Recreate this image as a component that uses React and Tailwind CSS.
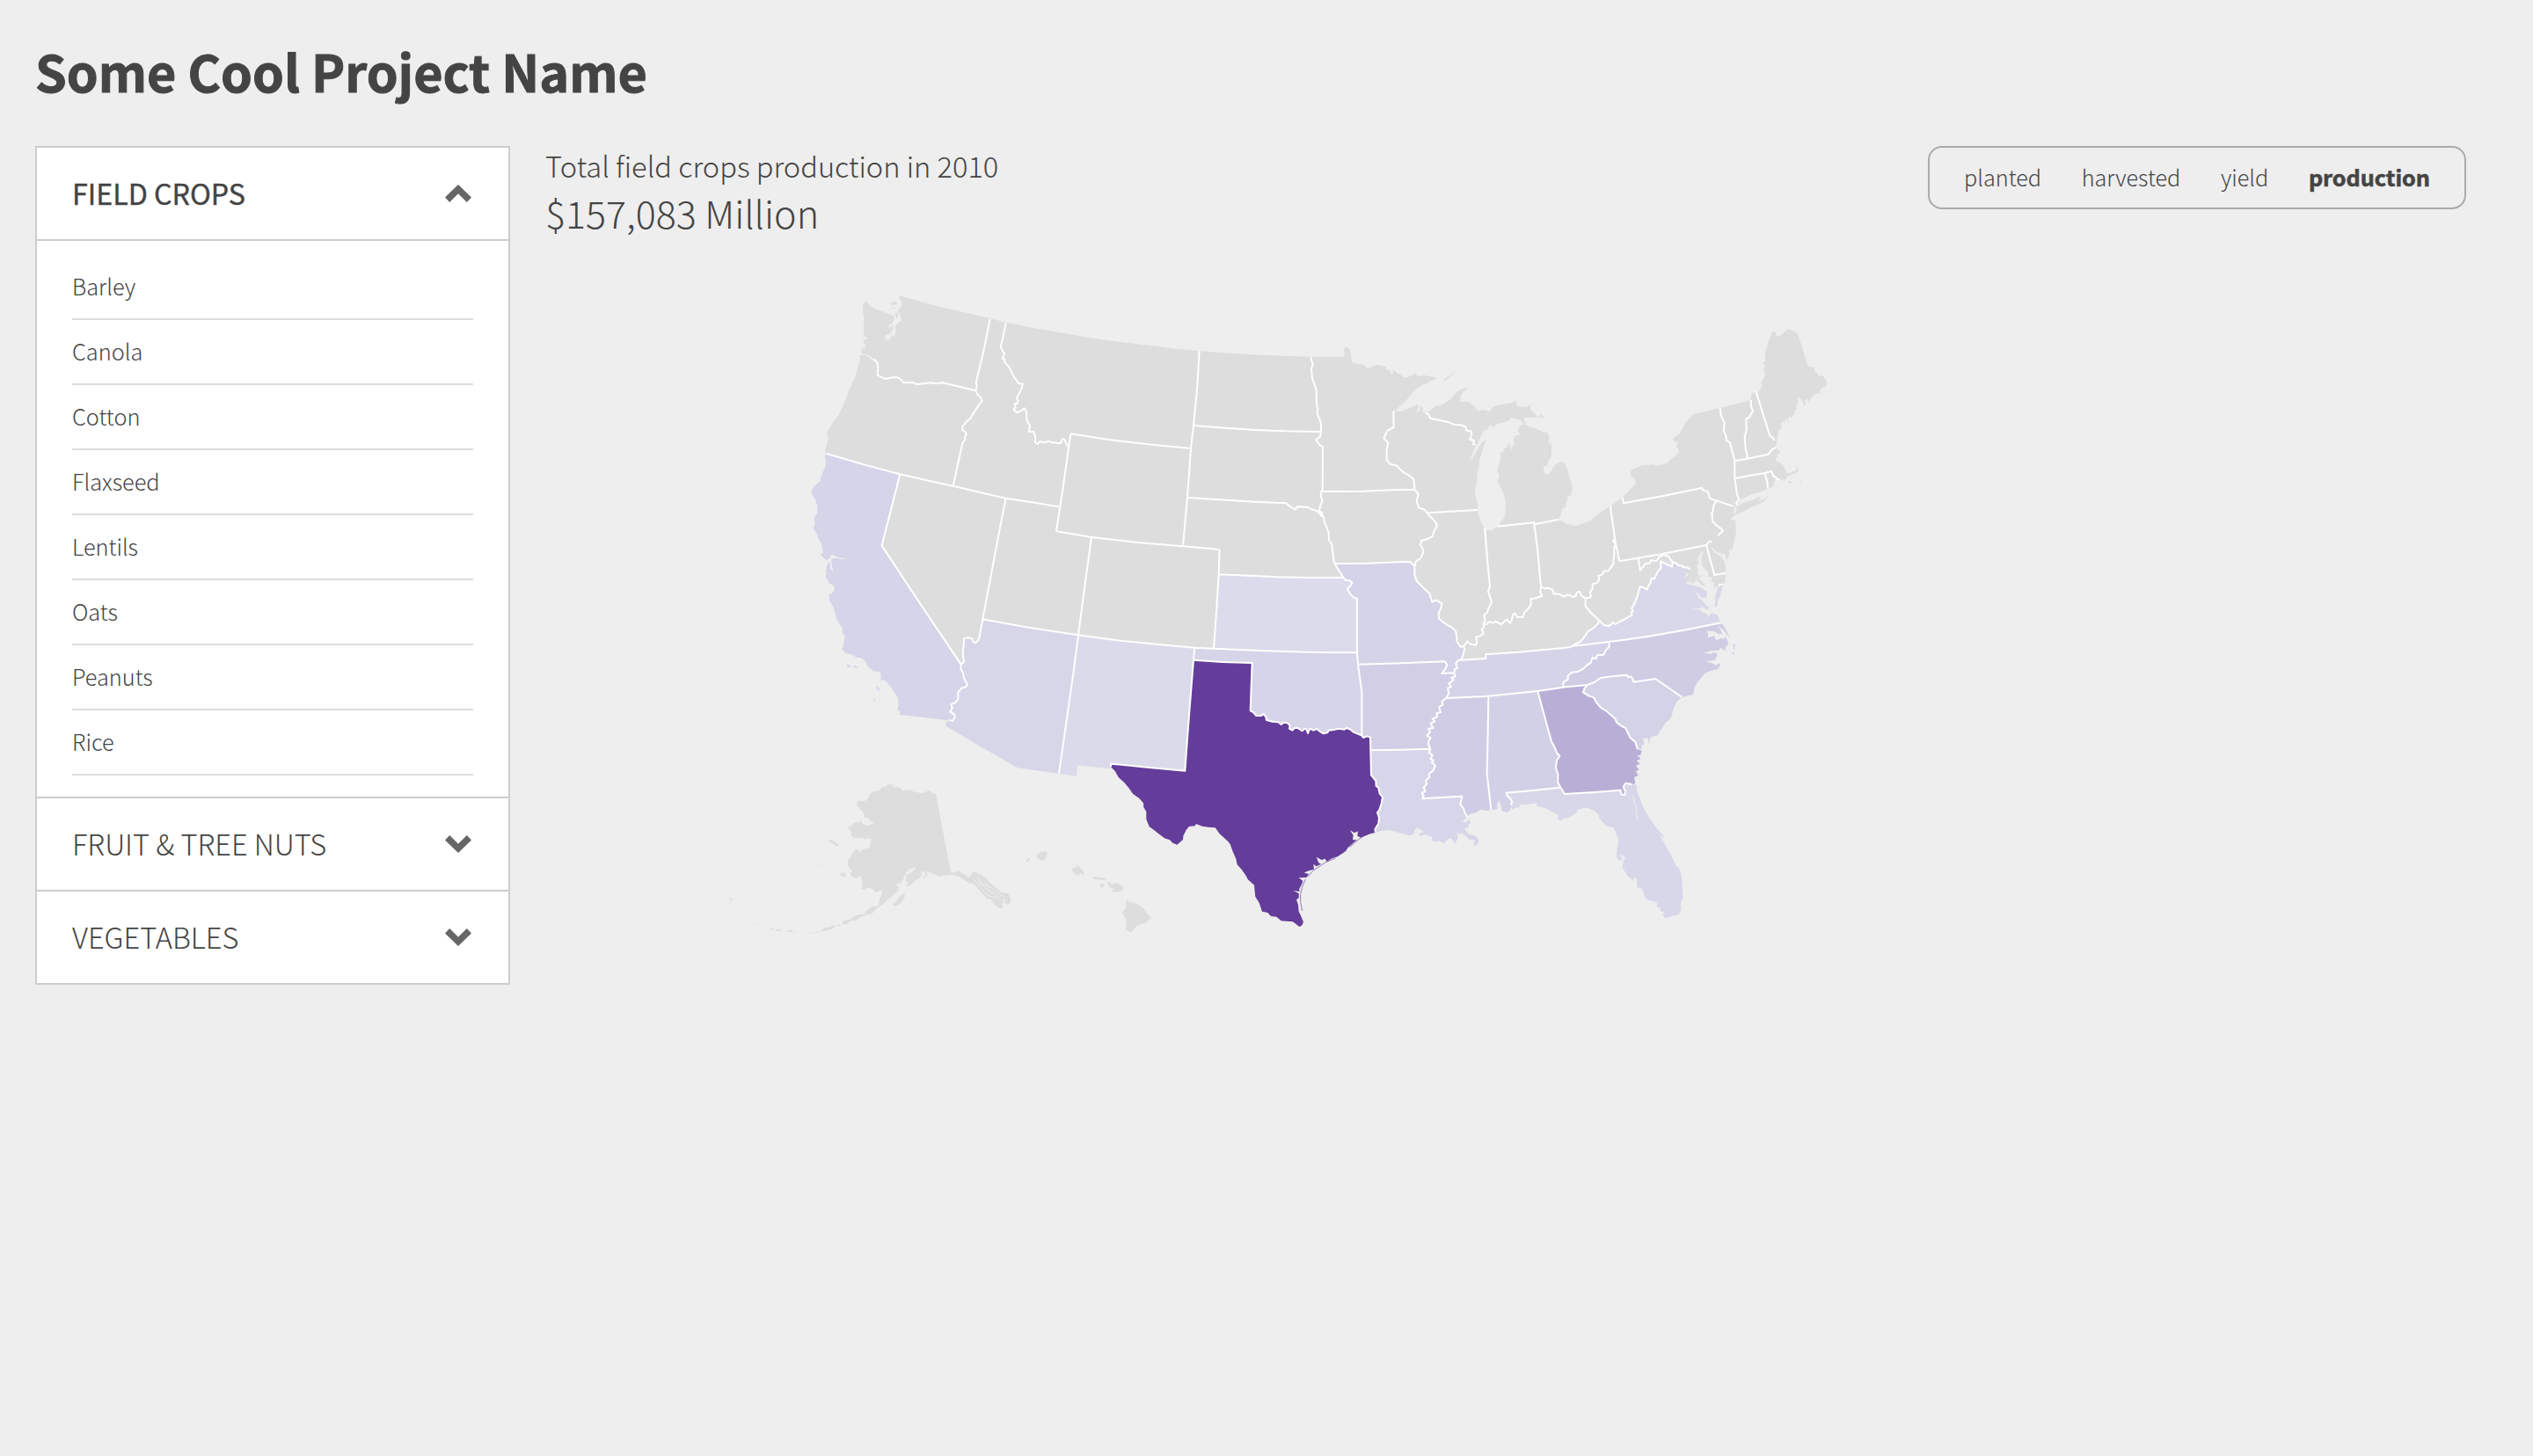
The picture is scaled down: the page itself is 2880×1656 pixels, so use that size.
import React from "react";

/* ---------- map geometry ---------- */

// Tile origins; arc points are written relative to the tile whose letter precedes them.
const TILES = {
  A: [840, 60],
  B: [1740, 60],
  C: [2640, 180],
  D: [3480, 180],
  E: [840, 900],
  F: [1800, 900],
  G: [2760, 900],
  H: [570, 1710],
};

function parseArc(text) {
  let origin = [0, 0];
  const points = [];
  text.trim().split(/\s+/).forEach((token) => {
    if (TILES[token]) {
      origin = TILES[token];
      return;
    }
    const [x, y] = token.split(",").map(Number);
    points.push([x + origin[0], y + origin[1]]);
  });
  return points;
}

const COASTS = {
  north: `A 118,588 115,577 119,560 125,534 120,515 128,502 144,478 160,458 170,436 186,400 192,380 204,354 215,330 223,308 228,285 234,270 233,250
    242,252 254,254 264,258 273,267 278,267 270,255 256,250 240,247 235,240 240,236 244,222 247,236 250,218 256,213 246,212 244,202 262,194 248,188 246,160 248,120 243,106 243,82 253,68 266,80 282,93 308,103 330,110 346,116 352,126 344,142 326,158 342,154 348,146 344,166 338,178 322,184 314,197 324,192 322,200 334,199 342,184 352,189 356,166 354,152 362,144 375,134 370,110 362,104 364,96 374,86 376,70 368,60 366,50 374,50 420,63 460,74 520,90 550,97 677,126 731,140 830,160 960,182
    B 60,182 110,191 170,200 230,208 340,221 420,231 491,238 600,245 700,251 800,255 870,257 960,258
    C 85,137 86,106 92,104 102,110 106,118 109,140 112,155 120,160 135,162 155,166 163,176 178,174 184,168 198,165 215,169 228,172 226,180 238,182 246,197 251,194 250,186 260,186 265,193 280,200 291,209 302,207 316,200 328,192 336,203 362,201 380,205 402,209
    385,218 370,226 355,232 335,243 320,258 300,282 280,302 262,318 266,324 280,323 304,315 335,300 339,308 333,320 335,327 345,318 341,310 350,305 354,314 350,324 366,330
    378,322 386,314 395,306 420,301 434,292 450,280 468,258 482,249 496,244 508,247 495,254 483,268 482,280 474,304 470,282 478,290 486,291 512,292 525,305 542,322 560,319 580,324 592,310 606,303 628,299 650,296 670,287 674,300 674,306 690,308 705,308 722,299 719,310 722,320 736,332 744,343 751,341 754,333 766,340 764,346 735,344 700,346 697,353 706,364 696,366 690,356 672,348 655,346 645,357 625,362 605,368 592,380 590,372 578,373 575,384 562,390 554,402 547,420 540,434
    530,448 522,468 513,487 522,486 532,467 545,445 556,428 570,420 562,438 556,462 546,490 545,516 537,532 540,550 538,566 531,590 530,602 541,640 540,660 543,676 552,700 563,726 582,730 596,725 608,716 618,703 630,688 635,665 636,632 628,602 618,582 608,560 614,544 607,522 618,490 617,466 628,462 630,450 640,446 648,428 652,450 657,455 656,430 663,452 665,430 661,418 670,406 685,402 677,391 684,374 696,366 716,376 734,380 750,388 768,395 778,395 786,415 781,426 792,438 792,476 782,492 779,508 765,512 766,532 780,541 792,526 802,508 825,495 836,500 846,520 854,550 864,580 860,610 846,612 848,622 841,640 842,648 828,656 824,676 815,693 835,702 848,710 862,705 852,713 880,714 898,706 925,698 942,680 960,667
    D 153,648 193,617 216,595 236,574 240,562 226,546 221,532 226,522 248,513 258,508 300,505 311,510 345,500 362,485 385,468 386,452 377,445 383,433 378,427 376,430 366,420 372,412 390,398 398,382 412,360 426,342 437,333 527,311 633,285 633,266 642,258 650,260 664,252 666,240 672,238 666,224 676,212 681,196 676,180 680,166 674,160 683,150 680,122 694,80 705,52 715,51 720,66 728,68 748,52 758,44 775,48 793,60 804,96 816,134 827,170 838,173 848,172 850,188 856,192 866,208 868,202 878,202 893,223 886,240 878,242 866,252 868,262 856,262 846,270 838,278 830,292 826,282 816,286 820,298 812,305 810,290 802,282 792,272 794,288 788,302 790,320 782,318 780,332 770,346 760,340 760,362 752,346 748,358 736,362 736,378 726,392 724,412 720,428 718,445 724,454 736,462 722,470 722,480 714,490 732,500 744,508 748,522 757,535 770,532 788,524 787,510 779,505 794,520 792,530 768,540 757,546 748,560 738,556 730,564 722,552 714,560 708,580 691,588 660,600 630,608 600,624 586,642 576,652 574,680 563,692 580,696 582,738 574,770 572,790 558,796 558,812 551,830 546,830 546,812 530,808 515,803 496,782 500,795 510,806 528,818 540,832 545,846 547,876 544,906 537,914`,
  delmarva: `D 537,914 530,940 526,958 518,970 516,993 509,990 511,960 513,945 522,918`,
  marylandBay: `D 522,918 505,928 508,912 496,902 500,890 486,888 488,876 474,860 466,850 463,836 464,820 472,798 460,808 453,822 447,824 456,836 449,852 452,868 450,880 466,888 454,892 470,908 478,924 460,912 446,898 436,910 424,905 406,907 407,886 418,884 415,872 425,862`,
  va: `G 1145,142 1136,152 1124,170 1130,190 1145,196 1180,205 1203,218 1200,240 1186,240 1172,224 1148,204 1165,222 1176,244 1188,248 1196,262 1210,272 1204,280 1180,266 1165,250 1186,276 1144,275 1180,282 1190,292 1200,293 1206,304 1218,292 1238,298 1244,316 1250,325`,
  nc: `G 1250,325 1262,340 1280,374 1270,364 1256,346 1236,334 1250,350 1254,364 1240,362 1228,354 1198,352 1206,360 1206,376 1226,370 1234,386 1250,378 1262,380 1264,370 1272,385 1275,400 1268,404 1264,420 1250,410 1240,420 1216,420 1190,428 1216,432 1226,426 1238,432 1230,452 1198,457 1222,464 1232,470 1250,462 1240,482 1214,490 1196,496 1170,528 1160,545 1155,570 1130,575 1116,578`,
  sc: `G 1116,578 1100,594 1088,616 1082,642 1072,658 1060,666 1050,684 1038,700 1036,708 1012,714 1006,726 1006,740 1000,718 984,720 988,742 980,738 980,756 966,757`,
  ga: `G 966,757 980,762 975,778 964,776 976,790 962,796 974,806 960,812 970,826 960,832 968,846 954,852 958,872 947,877`,
  fl: `G 947,877 962,878 963,900 974,924 982,950 1002,984 1030,1025 1054,1052 1054,1058 1042,1048 1048,1062 1070,1102 1084,1126 1096,1154 1108,1164 1116,1192 1118,1220 1120,1265 1112,1280 1114,1304 1105,1320 1088,1324 1060,1333 1052,1322 1058,1312 1044,1310 1042,1294 1032,1296 1032,1280 1022,1276 998,1270 990,1258 982,1232 964,1228 964,1194 954,1196 950,1205 932,1188 914,1160 918,1136 926,1128 916,1118 904,1116 914,1132 904,1136 895,1128 896,1096 900,1080 899,1060 890,1036 882,1022 862,1020 852,1010 834,990 834,980 815,964 790,955 778,958 760,963 758,972 738,986 710,994 706,1000 694,994 696,980 674,970 650,956 620,950 624,942 606,942 578,946 560,944 566,952 550,956 537,962 535,948`,
  al: `G 535,948 530,966 518,972 502,966 500,950 493,930 488,940 486,962 466,962`,
  ms: `G 466,962 450,966 430,962 410,975 396,976 385,985`,
  la: `G 385,985 376,995 366,1004 382,1006 388,996 398,1010 388,1012 390,1024 374,1026 390,1048 412,1052 424,1068 420,1080 406,1086 410,1066 392,1064 376,1048 366,1040 360,1048 350,1038 352,1060 344,1078 330,1060 316,1064 306,1078 292,1070 272,1072 264,1066 266,1056 240,1046 224,1052 220,1044 236,1040 230,1032 212,1024 202,1038 206,1042 190,1050 172,1046 140,1037 118,1032 92,1034 72,1040`,
  tx: `F 1032,1040 1010,1046 982,1058 970,1052 972,1036 960,1042 945,1033 956,1050 954,1066 968,1066 958,1074 938,1092 930,1104 904,1122 880,1130 866,1140 860,1130 848,1134 830,1124 838,1144 846,1148 830,1156 820,1148 822,1166 800,1172 788,1178 804,1182 796,1194 770,1195 784,1206 780,1218 772,1232 772,1242 750,1238 770,1248 770,1264 762,1270 768,1288 770,1310 776,1322 786,1346 780,1358 772,1362 750,1345 710,1342 694,1328 675,1326 664,1314 645,1310 635,1280 622,1260 618,1220 596,1200 590,1188 576,1168 560,1150 556,1130 546,1108 536,1080 528,1070 500,1045 485,1024 468,1023 440,1019 420,1011 416,1018 396,1020 386,1032 376,1052 375,1065 355,1082 340,1076 330,1066 312,1060 295,1047 276,1032 260,1020 250,995 250,970 241,954 240,940 226,924 204,908 190,888 175,870 155,852 143,830 129,817`,
  nm: `F 129,822 15,811 12,848 E 912,839`,
  az: `E 912,839 770,819 650,750 527,677 527,668 532,662 537,658`,
  ca: `E 537,658 450,647 368,638 370,628 362,622 365,605 363,582 350,560 336,540 322,524 315,520 305,523 305,500 300,492 280,490 258,472 256,462 240,445 222,443 210,435 182,427 172,413 178,402 180,382 183,370 171,356 176,348 164,330 155,316 148,290 142,270 130,250 128,228 142,222 147,207 140,195 130,192 118,170 118,150 122,126 130,116 132,140 144,152 138,130 136,108 150,104 168,108 186,108 176,104 160,102 150,96 136,92 130,104 118,112 98,92 108,88 106,70 100,50 92,38 86,20
    A 75,845 80,828 78,808 88,790 88,765 80,742 68,722 70,708 84,694 98,682 102,662 116,632 117,610 113,600 118,588`,
};

const BORDERS = {
  waId: `A 677,128 656,234 640,300 629,345 632,358 628,373`,
  waOr: `A 278,266 286,270 294,282 295,300 293,320 304,325 318,333 345,328 362,328 374,336 382,346 398,346 415,344 418,349 432,351 455,348 478,346 495,349 515,346 628,373`,
  orId: `A 628,373 634,386 645,396 649,408 636,426 617,455 612,466 602,474 584,493 582,507 593,514 597,522 591,530 592,540 583,552 551,698`,
  idMt: `A 731,142 720,196 713,224 726,248 720,262 728,268 725,274 742,292 750,308 758,326 768,338 774,348 789,350 782,372 774,386 768,400 773,408 769,418 761,418 764,432 757,438 768,448 782,442 795,433 801,445 801,464 806,482 813,492 810,512 826,514 832,534 831,550 840,555 846,547 866,550 875,545 890,550 918,553 922,540 930,538 936,550 942,562`,
  caOr: `A 120,588 245,625 370,658`,
  nvOr: `A 370,658 460,679 551,698`,
  idSouth: `A 551,698 640,719 731,740 820,754 911,769`,
  caNv: `A 370,658 308,900 E 308,62 440,262 578,467`,
  nvUt: `A 731,740 711,840 E 652,313`,
  nvAz: `E 652,313 640,378 634,388 627,394 620,390 615,379 600,375 588,379 587,405 584,420 588,458 578,467`,
  caAz: `E 578,467 577,482 585,496 588,514 600,535 594,544 580,548 568,562 568,585 558,598 544,603 548,616 541,630 554,636 557,648 550,659 537,658`,
  wyWest: `B 52,520 25,710 3,853`,
  wyNorth: `B 52,520 180,540 330,557 462,570`,
  wySouth: `B 3,853 F 63,33 220,51 375,64 500,75`,
  plainsWest: `B 491,238 483,370 471,490 462,570 450,738 F 375,64`,
  ndSd: `B 471,492 580,500 680,507 780,511 907,513`,
  sdNe: `B 450,738 550,744 680,752 787,757 800,768 818,778 825,769 860,770 872,777 888,782 900,790 908,802`,
  redRiver: `B 870,258 878,283 873,300 876,330 883,350 890,372 891,400 891,424 895,434 893,452 902,472 906,486 906,513 903,530 889,540 898,555 912,565 911,717`,
  mnIa: `B 902,717 C 60,597 150,596 250,592 325,590`,
  sdIa: `B 905,717 906,736 911,748 904,764 900,782 910,790 908,802`,
  neIa: `B 900,786 908,800 C 15,684 17,700 25,718 32,738 33,762 43,778 45,798 48,818 50,835`,
  neMo: `C 50,835 60,856 72,874 F 920,168`,
  ksMo: `F 920,168 930,180 943,180 952,188 946,200 936,208 942,222 956,238 969,243 969,427`,
  okMo: `F 969,427 972,467`,
  okAr: `F 972,467 978,510 985,557 985,710`,
  iaMo: `G -68,123 40,122 110,119 188,116 205,131`,
  mnWi: `C 258,324 253,326 254,378 232,390 220,415 235,430 230,455 230,490 243,504 262,508 285,530 310,545 322,556 325,590`,
  wiIa: `C 325,590 338,606 332,630 340,652 360,660 368,670`,
  iaIl: `C 368,670 380,684 396,700 402,716 392,730 388,748 372,758 348,765 345,780 354,794 354,808 345,825 330,836 325,851`,
  wiIl: `C 368,670 540,660`,
  wiMi: `C 362,328 372,334 380,348 410,354 440,360 458,368 480,370 498,375 502,388 518,392 520,400 514,420 528,422 525,436 533,438`,
  miSouth: `C 608,716 733,703 737,708 815,693`,
  ilIn: `C 565,726 572,820 G 445,5 455,130 462,200 456,218 468,254 458,275 453,290 441,300 446,314 440,328`,
  inOh: `C 733,706 745,800 G 625,80 636,202`,
  moIl: `G 205,131 205,160 212,182 235,206 256,225 265,254 278,248 298,258 296,272 287,292 288,311 312,330 330,340 345,352 350,378 348,386 362,408 372,405`,
  ilKy: `G 440,328 442,340 434,348 440,362 425,372 414,374 418,392 413,402 394,397 385,388 372,405`,
  ohioRiver: `G 440,328 450,330 458,322 475,325 480,320 500,330 520,314 530,326 536,318 540,298 548,293 556,306 575,306 578,292 590,280 603,262 601,244 614,242 640,234 634,220 636,202 650,208 662,206 676,212 680,226 700,228 715,236 728,229 745,236 755,234 758,222 768,218 776,234 788,242`,
  ohWv: `G 788,242 806,238 804,220 812,208 812,192 826,190 834,180 833,165 846,160 850,150 866,148 883,124 884,108 886,90 886,66 892,60 882,45 890,38`,
  kyWv: `G 788,242 788,268 806,290 836,318`,
  ohPa: `D 153,648 170,770 184,835`,
  kyVa: `G 740,405 772,388 782,376 797,354 815,343 830,328 836,318`,
  vaWv: `G 836,318 842,324 850,332 865,336 875,332 880,323 890,330 910,318 924,312 935,304 947,300 944,290 950,286 946,275 954,262 960,246 966,232 968,222 974,201 988,206 998,212 1003,198 1010,190 1012,173 1022,176 1036,148 1046,138 1044,115 1083,134 1085,118`,
  wvMd: `G 968,106 975,146 994,122 1006,122 1012,112 1030,114 1040,100 1054,94 1072,98 1078,110 1088,120`,
  vaMd: `G 1085,118 1100,122 1104,130 1118,130 1122,136 1134,136 1145,142`,
  paMd: `D 184,835 330,810 480,780`,
  deArc: `D 480,780 488,769 500,767`,
  deMd: `D 480,780 494,832 508,882 547,875`,
  mdVa: `D 522,920 526,915 537,914`,
  paNy: `D 194,617 198,637 330,613 465,585 470,593 482,595 488,604 491,618 500,624 515,628`,
  paNj: `D 515,628 505,645 503,665 499,670 501,698 512,710 538,730 520,747`,
  nyNj: `D 515,628 570,647`,
  nyEast: `D 527,312 530,338 542,362 540,392 547,406 549,424 560,428 570,465 577,493 577,553 586,612 593,624 582,636 586,642`,
  vtNh: `D 633,285 632,305 639,322 628,342 616,350 617,385 611,412 614,452 619,470 620,484`,
  nhMe: `D 650,257 673,330 697,407 708,414 712,424`,
  maNorth: `D 577,493 620,485 692,470 706,452 718,447`,
  maSouth: `D 577,553 630,542 680,534 702,528 710,546 718,548 720,556 728,554 730,562`,
  ctRi: `D 680,535 687,560 691,587`,
  kyTn: `G 352,453 400,450 448,447 448,433 560,425 740,408`,
  tnVa: `G 740,405 800,398 868,390`,
  vaNc: `G 868,390 930,382 1000,372 1120,351 1250,325`,
  tnNc: `G 868,390 870,405 858,418 850,434 828,436 824,448 812,444 806,462 795,468 780,482 764,491 742,494 728,506 728,518 712,528 712,545`,
  moKy: `G 372,405 376,415 370,436 365,450 352,455`,
  moTn: `G 352,455 346,464 351,480 342,482 340,496`,
  moAr: `F 972,467 G 160,463 308,457 316,468 310,482 298,498 340,496`,
  arTn: `G 340,496 344,508 330,512 338,520 322,532 330,544 318,548 322,566 313,582`,
  arMs: `G 313,582 298,594 302,604 288,612 294,630 280,634 282,646 266,652 274,662 260,668 268,684 252,686 258,698 247,710 260,718 252,730 254,746 260,755`,
  laMsRiver: `G 260,755 254,768 266,776 260,790 270,794 264,802 276,812 268,830 254,840 256,852 244,862 246,876 236,886 242,900 230,906 236,916 230,925`,
  laMs: `G 230,925 367,917 361,945 372,958 376,972 385,987`,
  arLa: `F 1015,760 G 160,758 260,755`,
  msTn: `G 313,582 450,576`,
  alTn: `G 450,576 625,558`,
  gaTn: `G 625,558 712,545`,
  gaNc: `G 712,545 795,537`,
  msAl: `G 450,574 457,578 455,700 452,840 466,962`,
  alGa: `G 625,558 650,650 672,730 684,752 690,768 700,780 690,795 687,820 694,842 694,870 703,887`,
  alFl: `G 703,887 600,898 518,905 521,916 533,926 537,936 535,948`,
  gaFl: `G 703,887 717,909 820,903 908,896 911,911 922,912 924,900 917,885 925,872 947,877`,
  gaSc: `G 795,537 784,550 780,562 800,575 816,580 826,598 842,616 860,626 890,653 894,665 912,678 925,684 940,716 958,732 966,757`,
  ncSc: `G 795,537 818,528 840,513 885,507 930,503 934,511 942,508 950,517 952,527 1027,516 1070,546 1116,578`,
  utCo: `F 63,33 40,200 18,367`,
  azNm: `F 18,367 0,505 E 912,839`,
  utAz: `E 652,313 800,340 977,367`,
  coNm: `F 17,367 150,385 300,400 415,410`,
  coOk: `F 415,410 480,413`,
  ksOk: `F 480,413 640,420 800,425 969,427`,
  coKs: `F 500,75 497,160 489,290 480,413`,
  neKs: `F 497,160 600,164 700,169 800,171 920,171`,
  nmOk: `F 415,410 411,452`,
  txOk: `F 411,452 510,459 611,462 608,540 605,625 615,630 625,642 643,642 650,636 658,646 660,657 680,662 700,664 710,672 718,665 732,667 740,676 738,686 748,692 756,684 765,683 782,694 790,686 797,690 801,702 808,686 820,692 832,687 842,696 854,703 868,700 872,692 890,690 905,686 925,689 935,684 948,690 955,697 985,710`,
  txAr: `F 985,710 990,717 1003,712 1014,716 1015,760`,
  txLa: `F 1015,760 1017,845 1033,864 1034,882 1042,888 1046,908 1056,920 1052,942 1044,966 1038,972 1044,990 1042,1010 1030,1030 1032,1040`,
  nmTx: `F 411,452 396,640 382,830 260,819 129,806 129,817`,
};

const ARCS = {};
Object.entries(COASTS).forEach(([key, text]) => {
  ARCS["c_" + key] = parseArc(text);
});
Object.entries(BORDERS).forEach(([key, text]) => {
  ARCS[key] = parseArc(text);
});

const toPath = (points) => "M" + points.map((p) => p.join(",")).join("L");

// Joins arcs end to end; a leading "-" walks the arc backwards.
function ring(list) {
  const points = list.split(" ").flatMap((key) =>
    key[0] === "-" ? [...ARCS[key.slice(1)]].reverse() : ARCS[key]
  );
  return toPath(points) + "Z";
}

const LAND = ring(
  "c_north c_delmarva c_marylandBay c_va c_nc c_sc c_ga c_fl c_al c_ms c_la c_tx c_nm c_az c_ca"
);

const STATES = [
  { id: "CA", fill: "#d6d4e9", d: ring("caOr caNv caAz c_ca") },
  { id: "AZ", fill: "#d7d5e8", d: ring("utAz azNm c_az -caAz -nvAz") },
  { id: "NM", fill: "#dbdaea", d: ring("coNm nmOk nmTx c_nm -azNm") },
  { id: "KS", fill: "#dcdbeb", d: ring("neKs ksMo -ksOk -coKs") },
  { id: "OK", fill: "#d6d4e9", d: ring("coOk ksOk okMo okAr -txOk -nmOk") },
  { id: "MO", fill: "#d5d3e8", d: ring("iaMo moIl moKy moTn -moAr -okMo -ksMo -neMo") },
  { id: "AR", fill: "#d2cee5", d: ring("moAr arTn arMs -arLa -txAr -okAr") },
  { id: "LA", fill: "#d7d5e9", d: ring("arLa laMsRiver laMs c_la -txLa") },
  { id: "MS", fill: "#d1cce5", d: ring("msTn msAl c_ms -laMs -laMsRiver -arMs") },
  { id: "AL", fill: "#d2d0e6", d: ring("alTn alGa alFl c_al -msAl") },
  { id: "TN", fill: "#d5d3e8", d: ring("kyTn tnVa tnNc -gaTn -alTn -msTn -arTn -moTn") },
  { id: "FL", fill: "#d8d7ea", d: ring("gaFl c_fl -alFl") },
  { id: "SC", fill: "#d4d2e7", d: ring("ncSc c_sc -gaSc") },
  { id: "NC", fill: "#d0cce4", d: ring("vaNc c_nc -ncSc -gaNc -tnNc") },
  { id: "VA", fill: "#d9d8ea", d: ring("c_va -vaNc -tnVa kyVa vaWv vaMd") },
  { id: "VA-shore", fill: "#d9d8ea", d: ring("c_delmarva mdVa") },
  { id: "GA", fill: "#b9afd6", d: ring("gaTn gaNc gaSc c_ga -gaFl -alGa") },
  { id: "TX", fill: "#643c99", d: ring("txOk txAr txLa c_tx -nmTx") },
];

const MESH = Object.keys(BORDERS)
  .map((key) => toPath(ARCS[key]))
  .join("");

const blobs = (list) => list.map((text) => toPath(parseArc(text)) + "Z").join("");

const GREY_ISLANDS = blobs([
  "C 423,215 465,188 436,215 428,220",
  "D 583,652 605,635 625,630 645,624 660,616 668,618 655,628 668,626 694,611 676,632 650,644 625,655 606,666 590,672 572,681 584,664",
  "D 757,567 765,561 772,567 765,569",
  "D 797,564 803,560 804,566",
  "A 338,75 350,68 361,72 357,80 348,78 342,84",
  "A 344,88 352,86 352,96",
  "A 356,106 364,112 360,128 352,116",
  // Alaska
  `H 602,62 606,70 613,66 619,77 630,74 641,78 648,87 672,85 690,92 715,96 738,88 750,95 762,98 813,366 825,368 838,360 850,370 866,376 878,386 880,374 893,362 904,368 925,380 950,404 985,434 1009,438 1018,458 1016,472 1004,478 990,456 994,474 984,470 992,488 982,490 962,478 950,458 938,458 914,432 900,414 888,404 874,402 856,390 838,380 812,374 796,376 774,381 750,370 735,364 728,372 736,374 716,392 726,374 722,362 710,364 716,372 708,386 690,394 680,408 660,416 668,398 660,400 662,376 676,368 692,356 690,346 684,354 672,354 660,370 652,388 644,402 626,406 636,418 634,430 610,450 596,462 584,474 560,490 544,508 524,510 505,520 486,532 472,532 460,542 442,544 446,532 468,528 490,512 520,508 524,498 545,484 566,482 570,460 576,444 580,426 556,434 546,424 530,418 518,426 508,424 512,404 506,378 490,388 474,380 468,370 476,362 462,342 462,326 474,308 486,290 498,288 500,298 520,286 536,284 540,262 542,248 520,254 510,248 484,250 472,240 474,228 460,212 474,208 482,198 510,191 514,202 528,208 552,199 540,192 530,180 518,178 516,164 504,150 492,134 497,122 520,123 530,116 538,98 554,90 568,88 580,76 594,74`,
  "H 397,256 410,258 420,264 433,274 424,279 414,270 400,264",
  "H 434,371 446,366 458,374 454,382 442,380",
  "H 655,436 656,452 644,470 624,484 614,474 630,462 640,448",
  "H 612,496 632,486 620,494",
  "H 364,570 384,556 400,554 412,546 418,554 396,564 376,568",
  "H 424,550 432,544 438,548 428,552",
  "H 358,338 366,346 362,348",
  "H 58,454 68,458 67,464 62,462",
  "H 65,474 71,475 66,477",
  "H 120,519 128,518 126,522",
  "H 140,540 146,541 144,545",
  "H 156,535 162,537 160,542",
  "H 195,551 203,558 212,560 206,564 197,558",
  "H 216,562 230,561 238,566 220,566",
  "H 252,566 270,562 274,570 256,570",
  "H 276,572 290,574 278,576",
  "H 298,572 308,572 306,574",
  "H 320,572 336,572 334,575",
  "H 346,572 362,568 364,572",
  "H 370,444 374,443 373,447",
  // Hawaii
  "H 1070,325 1082,316 1083,322 1073,332",
  "H 1105,310 1116,298 1140,295 1143,306 1136,322 1124,326 1110,320",
  "H 1224,354 1238,352 1246,341 1262,358 1271,375 1254,370 1248,377 1232,370",
  "H 1302,380 1318,383 1344,387 1338,394 1299,389",
  "H 1319,406 1332,404 1338,412 1328,420",
  "H 1348,398 1356,400 1362,408 1378,402 1402,418 1398,430 1376,434 1362,432 1368,424 1352,414",
  "H 1348,440 1356,434 1358,437",
  "H 1411,460 1424,468 1446,473 1470,488 1482,506 1496,522 1480,538 1460,544 1442,554 1430,572 1410,562 1412,528 1398,505 1412,484",
]);

const CHANNEL_ISLANDS = blobs([
  "E 186,468 198,468 203,475 192,478",
  "E 210,468 222,474 230,480 212,477",
  "E 216,540 222,541 219,544",
  "E 289,541 300,548 299,558 290,550",
  "E 277,578 283,586 288,594 280,590",
]);

const NC_BANKS = blobs(["G 1283,430 1296,426 1296,432", "G 1292,395 1296,424 1298,400"]);

const TX_BARRIERS =
  toPath(parseArc("F 986,1056 972,1066 944,1090")) +
  toPath(parseArc("F 896,1128 862,1142 822,1168 800,1192")) +
  toPath(parseArc("F 793,1200 782,1226 776,1252 776,1278 782,1308"));

const INLETS =
  toPath(parseArc("H 888,390 905,402 925,412 942,432 962,440 985,462")) +
  toPath(parseArc("H 905,380 915,402 938,415 950,435")) +
  toPath(parseArc("H 930,402 950,418 966,432 990,446 1002,466")) +
  toPath(parseArc("H 905,405 925,432 945,448 970,452")) +
  toPath(parseArc("G 948,915 955,935 962,955 960,975 968,998")) +
  toPath(parseArc("D 572,628 573,652"));

function ProductionMap() {
  return (
    <svg viewBox="0 0 6552 2400" className="mt-7 block h-[800px] w-[2184px]">
      <path d={LAND} fill="#dddddd" />
      <path d={GREY_ISLANDS} fill="#dddddd" />
      {STATES.map((s) => (
        <path key={s.id} d={s.d} fill={s.fill} />
      ))}
      <path d={CHANNEL_ISLANDS} fill="#d6d4e9" />
      <path d={NC_BANKS} fill="#d0cce4" />
      <path d={INLETS} fill="none" stroke="#eeeeee" strokeWidth="3" />
      <path d={TX_BARRIERS} fill="none" stroke="#643c99" strokeWidth="2" />
      <path d={MESH} fill="none" stroke="#ffffff" strokeWidth="6" strokeLinejoin="round" />
    </svg>
  );
}

/* ---------- sidebar ---------- */

const CROPS = ["Barley", "Canola", "Cotton", "Flaxseed", "Lentils", "Oats", "Peanuts", "Rice"];

function Chevron({ up }) {
  return (
    <svg viewBox="0 0 30 20" className={up ? "h-5 w-[30px] rotate-180" : "h-5 w-[30px]"}>
      <path d="M0 5.6 5.2 0 15 9.8 24.8 0 30 5.6 15 20Z" fill="#666666" />
    </svg>
  );
}

function SectionHeader({ label, open }) {
  return (
    <div className="flex h-[106px] items-center justify-between pr-[42px] pl-10 last:h-[104px]">
      <span
        className={
          open
            ? "pb-0.5 text-[32.2px] leading-[44px] font-normal [-webkit-text-stroke:0.4px_#444444]"
            : "pb-0.5 text-[32.6px] leading-[44px] font-light"
        }
      >
        {label}
      </span>
      <Chevron up={open} />
    </div>
  );
}

function Sidebar() {
  return (
    <aside className="w-[540px] shrink-0 divide-y-2 divide-[#cccccc] self-start border-2 border-[#cccccc] bg-white">
      <SectionHeader label="FIELD CROPS" open />
      <ul className="px-10 pt-4 pb-6">
        {CROPS.map((crop) => (
          <li
            key={crop}
            className="flex h-[74px] items-center border-b-2 border-[#dddddd] pb-0.5 text-[25.3px] leading-9 font-light"
          >
            {crop}
          </li>
        ))}
      </ul>
      <SectionHeader label="FRUIT &amp; TREE NUTS" />
      <SectionHeader label="VEGETABLES" />
    </aside>
  );
}

/* ---------- page ---------- */

function MeasureTabs() {
  return (
    <nav className="flex h-[72px] w-[612px] items-center justify-between rounded-2xl border-2 border-[#aaaaaa] px-[39px] pb-0.5 text-[25.2px] leading-9 font-light">
      <span>planted</span>
      <span>harvested</span>
      <span>yield</span>
      <span className="font-bold [-webkit-text-stroke:0.6px_#444444]">production</span>
    </nav>
  );
}

export default function App() {
  return (
    <div className="min-h-[1656px] w-[2880px] bg-[#eeeeee] pt-10 pr-[76px] pl-10 font-['Noto_Sans_CJK_SC','Noto_Sans',sans-serif] text-[#444444]">
      <h1 className="mb-[46px] text-[57.4px] leading-[80px] font-bold [-webkit-text-stroke:1px_#444444]">
        Some Cool Project Name
      </h1>
      <div className="flex gap-10">
        <Sidebar />
        <main className="min-w-0 flex-1">
          <div className="flex h-[106px] items-start justify-between">
            <div className="font-light">
              <p className="text-[32.6px] leading-[44px]">Total field crops production in 2010</p>
              <p className="text-[43px] leading-[62px]">$157,083 Million</p>
            </div>
            <MeasureTabs />
          </div>
          <ProductionMap />
        </main>
      </div>
    </div>
  );
}
